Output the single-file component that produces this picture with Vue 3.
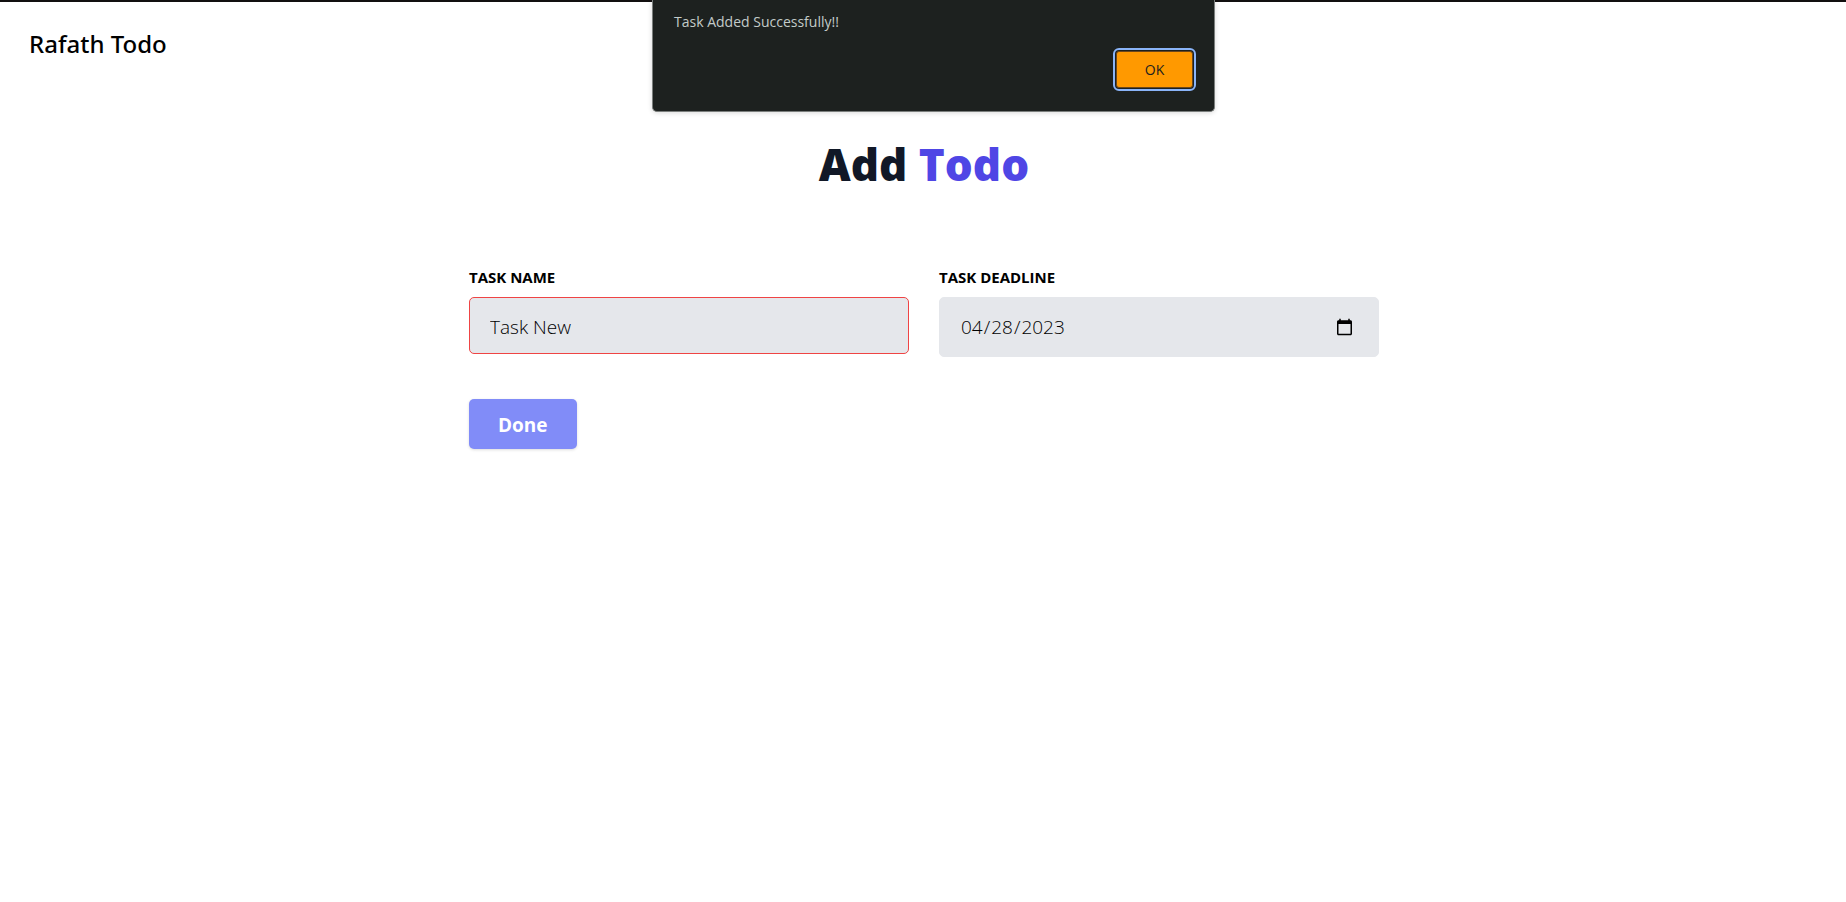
<script setup>
import { ref } from 'vue'

const taskName = ref('Task New')
const deadline = ref('2023-04-28')
const alertOpen = ref(true)
</script>

<template>
  <div class="page">
    <header class="navbar">
      <a class="brand" href="#">Rafath Todo</a>
    </header>

    <main class="content">
      <h1 class="title">Add <span class="accent">Todo</span></h1>
      <form class="form" @submit.prevent="alertOpen = true">
        <div class="fields">
          <div class="field">
            <label for="task-name">TASK NAME</label>
            <input id="task-name" v-model="taskName" class="name" type="text" />
          </div>
          <div class="field">
            <label for="task-deadline">TASK DEADLINE</label>
            <input id="task-deadline" v-model="deadline" class="date" type="date" />
          </div>
        </div>
        <button class="done" type="submit">Done</button>
      </form>
    </main>

    <div v-if="alertOpen" class="alert" role="alertdialog" aria-labelledby="alert-text">
      <p id="alert-text">Task Added Successfully!!</p>
      <button class="ok" type="button" @click="alertOpen = false">OK</button>
    </div>
  </div>
</template>

<style>
body {
  background: #fff;
}
</style>

<style scoped>
.page,
.page * {
  box-sizing: border-box;
}
.page {
  position: relative;
  border-top: 2px solid #121010;
  font-family: "Open Sans", "Noto Sans", sans-serif;
  color: #000;
}
.navbar {
  display: flex;
  align-items: center;
  height: 84px;
  padding: 0 29px;
}
.brand {
  font-family: "Noto Sans", "Open Sans", sans-serif;
  font-size: 24px;
  line-height: 32px;
  font-weight: 500;
  color: #000;
  text-decoration: none;
}
.content {
  max-width: 942px;
  margin: 0 auto;
  padding: 54px 15px 32px 17px;
}
.title {
  margin: 0;
  text-align: center;
  font-size: 44px;
  line-height: 48px;
  font-weight: 800;
  color: #111827;
}
.accent {
  color: #4f46e5;
}
.form {
  margin-top: 77px;
}
.fields {
  display: flex;
  align-items: flex-start;
  gap: 30px;
}
.field {
  flex: 1;
  min-width: 0;
}
.field label {
  display: block;
  margin-bottom: 8px;
  font-size: 15px;
  line-height: 24px;
  font-weight: 700;
}
.field input {
  display: block;
  width: 100%;
  border: 1px solid #e5e7eb;
  border-radius: 5px;
  background: #e5e7eb;
  padding: 2px 20px 0;
  font-family: inherit;
  font-size: 19px;
  font-weight: 300;
  color: #000;
  outline: none;
}
.field .name {
  height: 57px;
  border-color: #ef4444;
}
.field .date {
  height: 60px;
  padding: 0 22px 0 20px;
}
.done {
  display: block;
  margin-top: 42px;
  height: 50px;
  padding: 2px 29px 0;
  border: 0;
  border-radius: 5px;
  background: #818cf8;
  box-shadow: 0 1px 3px rgba(0, 0, 0, 0.14);
  font-family: inherit;
  font-size: 19px;
  font-weight: 700;
  color: #fff;
}
.alert {
  position: absolute;
  top: -2px;
  left: 50%;
  width: 563px;
  margin-left: -271px;
  padding: 10px 21px 23px;
  display: flex;
  flex-direction: column;
  gap: 17px;
  border: 1px solid #7b7f7d;
  border-top: 0;
  border-radius: 0 0 5px 5px;
  background: #1d211f;
  box-shadow: 0 1px 5px rgba(0, 0, 0, 0.15);
}
.alert p {
  margin: 0;
  font-size: 14px;
  line-height: 24px;
  color: #c3cbc9;
}
.ok {
  align-self: flex-end;
  width: 77px;
  height: 37px;
  border: 1px solid #6b471c;
  border-radius: 3px;
  background: #ff9900;
  outline: 2px solid #8ab4f8;
  outline-offset: 1px;
  font-family: inherit;
  font-size: 14px;
  color: #1d211f;
}
</style>
